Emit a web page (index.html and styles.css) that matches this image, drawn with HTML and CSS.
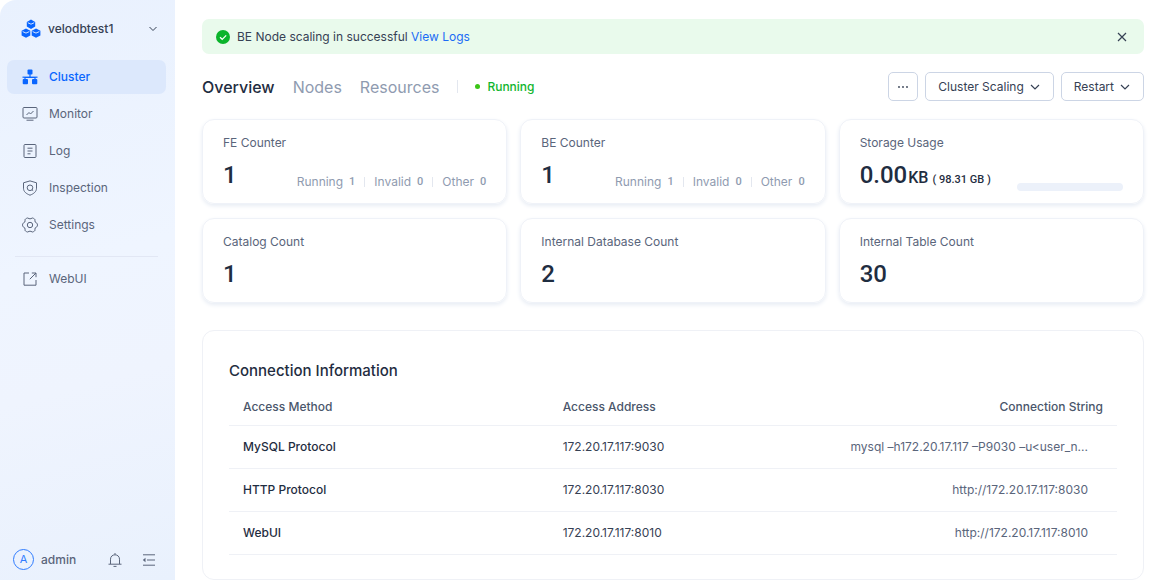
FILE: index.html
```html
<!doctype html>
<html lang="en">
    <head>
        <meta charset="utf-8"/>
        <title>velodbtest1 - Cluster</title>
        <link rel="stylesheet" href="styles.css">
    </head>
    <body>
        <aside class="sidebar">
            <button class="instance" type="button">
                <svg class="logo" viewBox="0 0 20 20" width="20" height="20">
                    <g fill="#0a66ff">
                        <path d="M10 0.6l4.200 2.300v4.700L10 10 5.800 7.600V2.900z"/>
                        <path d="M5 9.400l4.300 2.300v4.700L5 18.800.6 16.400v-4.700z"/>
                        <path d="M15 9.400l4.400 2.300v4.700L15 18.800l-4.300-2.400v-4.700z"/>
                    </g>
                    <path d="M6.800 3.700L10 5.200l3.200-1.500M1.700 12.600L5 14.100l3.300-1.500M11.700 12.600l3.300 1.500 3.300-1.500" fill="none" stroke="#eaf2ff" stroke-width="0.900"/>
                </svg>
                <span class="instance-name">velodbtest1</span>
                <svg class="chevron" viewBox="0 0 10 10" width="10" height="10"><path d="M1.500 3L5 6.500 8.500 3"/></svg>
            </button>
            <nav class="menu">
                <a class="menu-item active" href="#cluster">
                    <svg viewBox="0 0 16 16" width="16" height="16">
                        <path d="M8 5v3.500M3 11V8.500h10V11" stroke-width="1.200"/>
                        <g fill="currentColor" stroke="none"><rect x="5.500" y="0.500" width="5" height="5" rx="1"/><rect x="0.700" y="10" width="5.300" height="5.300" rx="1"/><rect x="10" y="10" width="5.300" height="5.300" rx="1"/><path d="M0.500 7.600h15v1.200H.5z"/></g>
                    </svg>
                    Cluster
                </a>
                <a class="menu-item" href="#monitor">
                    <svg viewBox="0 0 16 16" width="16" height="16"><rect x="1" y="1.500" width="14" height="10.500" rx="1"/><path d="M4.500 9l2.500-2.500 1.500 1.500 3-3M4.500 14.200h7"/></svg>
                    Monitor
                </a>
                <a class="menu-item" href="#log">
                    <svg viewBox="0 0 16 16" width="16" height="16"><rect x="2" y="1.500" width="12" height="13" rx="1"/><path d="M5.500 5.200h5M5.500 8h5M5.500 10.800h3"/></svg>
                    Log
                </a>
                <a class="menu-item" href="#inspection">
                    <svg viewBox="0 0 16 16" width="16" height="16"><path d="M8 0.900l6.500 1.900v5.400c0 3.500-2.700 5.500-6.500 7-3.800-1.500-6.500-3.500-6.500-7V2.800z" stroke-linejoin="round"/><circle cx="8" cy="7.800" r="2.800"/><path d="M9.900 9.700l1.300 1"/></svg>
                    Inspection
                </a>
                <a class="menu-item" href="#settings">
                    <svg viewBox="0 0 16 16" width="16" height="16"><path d="M4.600 1.300Q5.300.7 6 1.200 8 2.600 10 1.200q.7-.5 1.400.1l1.100.7q.6.400.4 1.200-.3 2.200 1.700 2.900.8.300.8 1v1.800q0 .7-.8 1-2 .7-1.700 2.900.2.800-.4 1.200l-1.100.7q-.7.600-1.400.1-2-1.400-4 0-.7.500-1.400-.1L3.500 14q-.6-.4-.4-1.200.3-2.200-1.700-2.900-.8-.3-.8-1V7.100q0-.7.8-1 2-.7 1.700-2.900-.2-.8.4-1.200z"/><circle cx="8" cy="8" r="2.700"/></svg>
                    Settings
                </a>
                <hr class="menu-line">
                <a class="menu-item" href="#webui">
                    <svg viewBox="0 0 16 16" width="16" height="16"><path d="M7 2H2v12.200h12V9M9.800 2H14v4.200M14 2L7.800 8.200"/></svg>
                    WebUI
                </a>
            </nav>
            <footer class="user">
                <span class="avatar">A</span>
                <span class="user-name">admin</span>
                <button class="icon-button bell" type="button" aria-label="Notifications">
                    <svg viewBox="0 0 16 16" width="16" height="16"><path d="M3.500 12V7.200C3.500 4.500 5.500 2.800 8 2.800s4.500 1.700 4.500 4.400V12M1.500 12.200h13M6.500 14.400h3M8 1v1.500"/></svg>
                </button>
                <button class="icon-button" type="button" aria-label="Collapse menu">
                    <svg viewBox="0 0 16 16" width="16" height="16"><path d="M2 2.800h12M6 8h8M2 13.200h12"/><path d="M4.500 5.800v4.400L1.800 8z" fill="currentColor" stroke="none"/></svg>
                </button>
            </footer>
        </aside>
        <main>
            <div class="notice">
                <svg viewBox="0 0 14 14" width="14" height="14"><circle cx="7" cy="7" r="7" fill="#0bb42b"/><path d="M4 7.200l2.200 2.100L10.200 5.300" fill="none" stroke="#fff" stroke-width="1.200"/></svg>
                <p>BE Node scaling in successful <a href="#logs">View Logs</a></p>
                <button class="icon-button close" type="button" aria-label="Close">
                    <svg viewBox="0 0 10 10" width="10" height="10"><path d="M1 1l8 8M9 1L1 9" stroke-width="1.200"/></svg>
                </button>
            </div>
            <header class="toolbar">
                <nav class="tabs">
                    <a class="tab active" href="#overview">Overview</a>
                    <a class="tab" href="#nodes">Nodes</a>
                    <a class="tab" href="#resources">Resources</a>
                </nav>
                <span class="status">Running</span>
                <div class="actions">
                    <button class="button more" type="button" aria-label="More">
                        <svg viewBox="0 0 12 12" width="12" height="12"><g fill="currentColor" stroke="none"><circle cx="2" cy="6" r="0.900"/><circle cx="6" cy="6" r="0.900"/><circle cx="10" cy="6" r="0.900"/></g></svg>
                    </button>
                    <button class="button" type="button">Cluster Scaling <svg viewBox="0 0 10 10" width="10" height="10"><path d="M1 3l4 4 4-4" stroke-width="1.200"/></svg></button>
                    <button class="button" type="button">Restart <svg viewBox="0 0 10 10" width="10" height="10"><path d="M1 3l4 4 4-4" stroke-width="1.200"/></svg></button>
                </div>
            </header>
            <section class="cards">
                <article class="card">
                    <h2>FE Counter</h2>
                    <div class="card-row">
                        <strong>1</strong>
                        <ul class="counts">
                            <li>Running <b>1</b></li>
                            <li>Invalid <b>0</b></li>
                            <li>Other <b>0</b></li>
                        </ul>
                    </div>
                </article>
                <article class="card">
                    <h2>BE Counter</h2>
                    <div class="card-row">
                        <strong>1</strong>
                        <ul class="counts">
                            <li>Running <b>1</b></li>
                            <li>Invalid <b>0</b></li>
                            <li>Other <b>0</b></li>
                        </ul>
                    </div>
                </article>
                <article class="card">
                    <h2>Storage Usage</h2>
                    <div class="card-row">
                        <strong>0.00<span class="unit">KB</span><span class="total">( 98.31 GB )</span></strong>
                        <div class="usage-bar"></div>
                    </div>
                </article>
                <article class="card">
                    <h2>Catalog Count</h2>
                    <div class="card-row"><strong>1</strong></div>
                </article>
                <article class="card">
                    <h2>Internal Database Count</h2>
                    <div class="card-row"><strong>2</strong></div>
                </article>
                <article class="card">
                    <h2>Internal Table Count</h2>
                    <div class="card-row"><strong>30</strong></div>
                </article>
            </section>
            <section class="connection">
                <h1>Connection Information</h1>
                <table>
                    <thead>
                        <tr><th>Access Method</th><th>Access Address</th><th>Connection String</th></tr>
                    </thead>
                    <tbody>
                        <tr><th>MySQL Protocol</th><td>172.20.17.117:9030</td><td>mysql –h172.20.17.117 –P9030 –u&lt;user_n...</td></tr>
                        <tr><th>HTTP Protocol</th><td>172.20.17.117:8030</td><td>http://172.20.17.117:8030</td></tr>
                        <tr><th>WebUI</th><td>172.20.17.117:8010</td><td>http://172.20.17.117:8010</td></tr>
                    </tbody>
                </table>
            </section>
        </main>
    </body>
</html>
```
FILE: styles.css
```css
:root {
    --blue: #1b6cf5;
    --green: #12b52e;
    --dark: #1f2d41;
    --text: #364154;
    --gray: #5a657b;
    --light: #8f9bb0;
    --line: #eff1f6;
}
* {
    box-sizing: border-box;
}
body {
    margin: 0;
    height: 100vh;
    display: flex;
    overflow: hidden;
    background: #fff;
    color: var(--text);
    font: 12px/18px Inter, "Liberation Sans", sans-serif;
}
a {
    color: var(--blue);
    text-decoration: none;
}
button {
    font: inherit;
    color: inherit;
    background: none;
    border: 0;
    padding: 0;
}
svg {
    display: block;
    flex: none;
    fill: none;
    stroke: currentColor;
}
.logo g,
.notice circle {
    stroke: none;
}

/* Sidebar */
.sidebar {
    flex: none;
    width: 175px;
    display: flex;
    flex-direction: column;
    padding: 18px 9px 10px 7px;
    border-top-left-radius: 16px;
    background: linear-gradient(165deg, #e9f1fe 0%, #eff5ff 45%, #eff4fe 65%, #e9f1fd 100%);
}
.instance {
    display: flex;
    align-items: center;
    gap: 7px;
    height: 22px;
    padding: 0 8px 0 14px;
}
.instance-name {
    flex: 1;
    text-align: left;
    font-weight: 500;
}
.menu {
    display: flex;
    flex-direction: column;
    gap: 3px;
    margin-top: 20px;
}
.menu-item {
    display: flex;
    align-items: center;
    gap: 11px;
    height: 34px;
    padding: 0 15px;
    border-radius: 7px;
    color: var(--gray);
}
.menu-item.active {
    background: #dce8fc;
    color: #0a66ff;
    font-weight: 500;
}
.menu-line {
    width: 143px;
    height: 1px;
    margin: 11px 8px 2px;
    border: 0;
    background: #e2e7f4;
}
.user {
    display: flex;
    align-items: center;
    margin-top: auto;
    padding: 0 9px 0 6px;
    color: var(--gray);
}
.avatar {
    width: 21px;
    height: 21px;
    margin-right: 7px;
    border: 1px solid #2f7cff;
    border-radius: 50%;
    color: #2f7cff;
    font-size: 11px;
    line-height: 19px;
    text-align: center;
}
.user-name {
    font-weight: 500;
}
.bell {
    margin: 0 18px 0 auto;
}

/* Content */
main {
    flex: 1;
    min-width: 0;
    padding: 19px 24px 0 27px;
}
.notice {
    display: flex;
    align-items: center;
    gap: 7px;
    height: 35px;
    padding: 0 17px 0 14px;
    border-radius: 7px;
    background: #e9faec;
}
.notice p {
    margin: 0;
}
.close {
    margin-left: auto;
}
.toolbar {
    display: flex;
    align-items: center;
    margin: 18px 0;
}
.tabs {
    display: flex;
    gap: 18px;
    padding-right: 18px;
    font-size: 16px;
}
.tab {
    color: var(--light);
}
.tab.active {
    color: var(--dark);
    font-weight: 500;
}
.status {
    display: flex;
    align-items: center;
    gap: 7px;
    height: 13px;
    padding-left: 17px;
    border-left: 1px solid #e3e7ef;
    color: var(--green);
    font-weight: 500;
}
.status::before {
    content: "";
    width: 5px;
    height: 5px;
    border-radius: 50%;
    background: #3bc517;
}
.actions {
    display: flex;
    gap: 7px;
    margin-left: auto;
}
.button {
    display: flex;
    align-items: center;
    gap: 6px;
    height: 29px;
    padding: 0 13px 0 12px;
    border: 1px solid #ccd5e5;
    border-radius: 5px;
}
.button.more {
    padding: 0 8px;
}
.cards {
    display: grid;
    grid-template-columns: repeat(3, 1fr);
    gap: 14px 13px;
}
.card {
    height: 85px;
    padding: 14px 20px;
    border: 1px solid #eff2f8;
    border-radius: 12px;
    box-shadow: 0 2px 4px #e7ecf4;
}
.card h2 {
    margin: 0;
    color: var(--gray);
    font-size: 12px;
    font-weight: 400;
}
.card-row {
    display: flex;
    align-items: flex-end;
    justify-content: space-between;
    margin-top: 8px;
}
.card strong {
    color: var(--dark);
    font: 500 24px/30px Roboto, sans-serif;
}
.card .unit {
    margin-left: 1px;
    font-size: 16px;
}
.card .total {
    margin-left: 4px;
    font-size: 11px;
}
.counts {
    display: flex;
    margin: 0;
    padding: 0;
    list-style: none;
    color: var(--light);
}
.counts li {
    display: flex;
    align-items: center;
    gap: 6px;
    height: 10px;
    margin-bottom: 3px;
}
.counts li + li {
    margin-left: 9px;
    padding-left: 9px;
    border-left: 1px solid #e3e7ef;
}
.counts b {
    font: 500 11px/18px Roboto, sans-serif;
}
.usage-bar {
    width: 106px;
    height: 8px;
    margin-bottom: 4px;
    border-radius: 4px;
    background: #ecf1fa;
}
.connection {
    height: 250px;
    margin-top: 27px;
    padding: 29px 26px;
    border: 1px solid var(--line);
    border-radius: 12px;
}
.connection h1 {
    margin: 0;
    color: var(--dark);
    font-size: 15px;
    line-height: 22px;
    font-weight: 500;
}
table {
    width: 100%;
    margin-top: 6px;
    border-collapse: collapse;
    table-layout: fixed;
}
tr {
    height: 43px;
    border-bottom: 1px solid var(--line);
}
thead tr {
    height: 37px;
}
th,
td {
    width: 36%;
    padding: 0 14px;
    text-align: left;
    font-weight: 500;
}
th:nth-child(2) {
    width: 28%;
}
th:last-child,
td:last-child {
    text-align: right;
}
thead th {
    padding-top: 2px;
    color: #4a566b;
}
tbody th {
    color: var(--dark);
}
td {
    font-weight: 400;
}
td:last-child {
    padding: 0 29px 0 0;
    color: var(--gray);
    white-space: nowrap;
}
```
